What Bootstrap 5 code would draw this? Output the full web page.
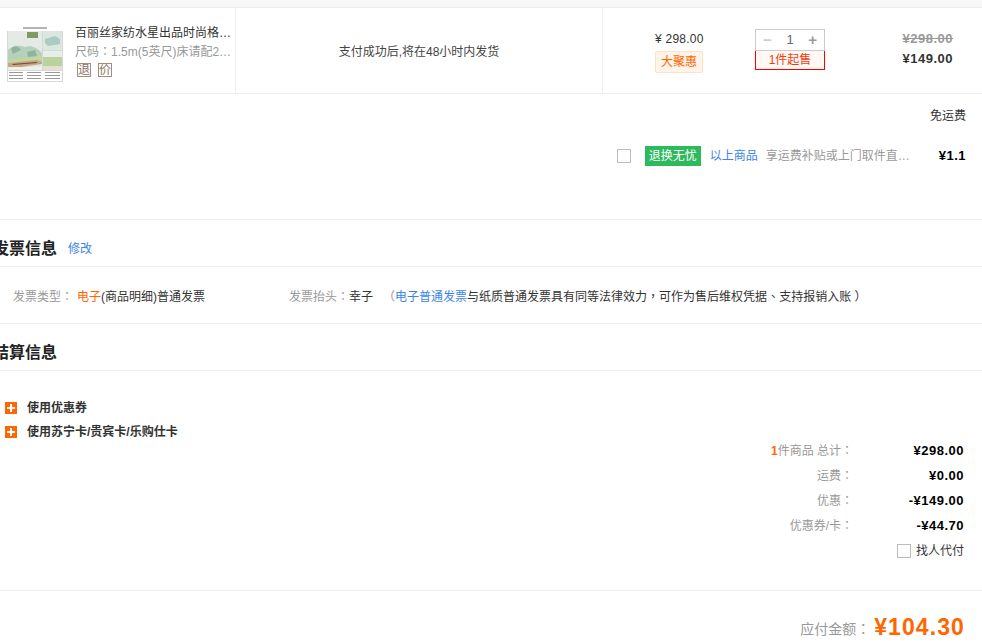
<!DOCTYPE html>
<html lang="zh-CN">
<head>
<meta charset="utf-8">
<title>结算信息</title>
<link href="https://cdn.jsdelivr.net/npm/bootstrap@5.3.0/dist/css/bootstrap.min.css" rel="stylesheet">
<style>
html,body{margin:0;height:643px;overflow:hidden;background:#fff}
body{font-family:"Liberation Sans","Noto Sans CJK SC",sans-serif;font-size:12px;line-height:18px;color:#333}
.zh-colon{font-family:"Noto Sans CJK TC",sans-serif}
.money{font-family:"Liberation Sans",sans-serif;font-weight:700;font-size:13px;letter-spacing:.5px}
.top-strip{height:8px;background:#f8f8f8;border-bottom:1px solid #eee}
.line-row{height:86px;border-bottom:1px solid #eee}
.goods-cell{width:236px;border-right:1px solid #eee;padding:0 0 0 7px}
.goods-pic{width:56px;height:56px;flex:none;margin-top:18px}
.goods-info{width:157px;margin-left:12px;padding-top:16px}
.clip-line{white-space:nowrap;overflow:hidden;text-overflow:ellipsis;height:18px}
.goods-sub{color:#999}
.tag-row{margin-top:3px;margin-left:2px;gap:7px}
.tag-box{width:14px;height:14px;border:1px solid #a98b7e;color:#8f7265;font-size:12px;line-height:12px;text-align:center;overflow:hidden}
.ship-cell{width:367px;border-right:1px solid #eee;padding-top:2px;color:#444}
.price-cell{width:152px;padding-top:22px}
.price-num{letter-spacing:.25px}
.price-tag{margin-top:3px;height:22px;width:48px;background:#fff4ea;border:1px solid #fde1c8;border-radius:2px;color:#f60;line-height:20px;text-align:center}
.price-box{width:48px;margin-left:52px}
.qty-cell{width:70px;padding-top:21px}
.qty-box{height:22px;width:70px;border:1px solid #ccc;color:#666;font-size:13px;line-height:20px}
.qty-box span{flex:1;text-align:center}
.qty-minus{color:#ccc;font-weight:700;font-size:15px}
.qty-plus{color:#999;font-weight:700;font-size:15px}
.qty-min{height:19px;border:1px solid #f00;border-top:0;background:#fff8f3;color:#f23c10;text-align:center;line-height:18px}
.sum-cell{flex:1;padding-top:21px;padding-right:29px;text-align:right;line-height:20px;color:#333}
.sum-old{color:#999;text-decoration:line-through}
.freight-row{padding:13px 16px 0 0;height:42px}
.insure-row{height:84px;border-bottom:1px solid #eee;padding:0 16px 44px 0}
.insure-check{width:14px;height:14px;border:1px solid #bbb;margin-right:14px}
.green-tag{width:56px;height:20px;background:#2dba5c;color:#fff;line-height:20px;text-align:center;margin-right:9px}
.blue-text{color:#3a85e8}
.insure-note{color:#999;width:146px;margin-left:8px;margin-right:27px}
.sec-title{height:47px;border-bottom:1px solid #eee;margin-left:-7px;padding-top:12px}
.sec-title strong{font-size:16px;color:#222;font-weight:700;line-height:22px}
.sec-title a{margin-left:11px;color:#3a85e8;text-decoration:none}
.invoice-row{height:57px;border-bottom:1px solid #eee;padding-left:13px;padding-top:2px}
.muted-label{color:#999}
.inv-kind{width:276px}
.orange-text{color:#f60}
.open-paren{margin-left:10px}
.type-label{margin-right:4px}
.coupon-area{padding:25px 0 0 5px;height:69px}
.coupon-row{height:24px;font-weight:700;color:#333}
.plus-box{width:12px;height:12px;background:#f60;position:relative;margin-right:10px;flex:none}
.plus-box::before{content:"";position:absolute;left:2px;right:2px;top:5px;height:2px;background:#fff}
.plus-box::after{content:"";position:absolute;top:2px;bottom:2px;left:5px;width:2px;background:#fff}
.total-wrap{padding-right:18px;height:152px;margin-top:-2px}
.total-row{height:25px;justify-content:flex-end}
.total-label{color:#999;text-align:right}
.total-val{width:111px;text-align:right;color:#000}
.agent-check{width:14px;height:14px;border:1px solid #bbb;margin-right:5px}
.pay-row{border-top:1px solid #eee;height:53px;padding:22px 17px 0 0;justify-content:flex-end}
.pay-label{color:#999;font-size:14px;padding-top:6px;margin-right:4px}
.pay-val{color:#f60;font-family:"Liberation Sans",sans-serif;font-size:23px;letter-spacing:1.1px;font-weight:700;line-height:28px}
</style>
</head>
<body>
<div class="top-strip"></div>
<div class="line-row d-flex">
  <div class="goods-cell d-flex">
    <svg class="goods-pic" viewBox="0 0 56 56" role="img" aria-label="商品图">
      <rect width="56" height="56" fill="#fff"/>
      <rect x="16" y="1" width="24" height="2" fill="#b5b5b5"/>
      <rect x="0" y="5" width="56" height="51" fill="#d8d8d8"/>
      <rect x="1" y="5" width="34" height="39" fill="#e4ebe6"/>
      <rect x="20" y="6" width="11" height="6" fill="#7f9c5e"/>
      <path d="M1 24C8 17 14 20 18 21C24 19 30 22 35 27V36H1Z" fill="#b5d0bb"/>
      <path d="M4 23C7 19 12 20 14 24L6 28ZM20 26L28 24L30 30L21 31Z" fill="#8fb5a0"/>
      <path d="M1 33C12 33 26 32 35 29V34C24 35 12 37 1 37Z" fill="#c3d69e"/>
      <path d="M1 37L30 34L35 36V38L8 42L1 41Z" fill="#c7a686"/>
      <path d="M5 38L30 36V37L6 39Z" fill="#6b4f3a"/>
      <rect x="1" y="41" width="34" height="3" fill="#eef0ea"/>
      <rect x="36" y="5" width="19" height="19" fill="#dce8df"/>
      <path d="M38 13l10-3 5 3v5l-12 2-3-3Z" fill="#a9cbc0"/>
      <rect x="36" y="25" width="19" height="19" fill="#b9d39f"/>
      <rect x="36" y="25" width="19" height="6" fill="#e6eee6"/>
      <rect x="36" y="40" width="19" height="4" fill="#e6dfcf"/>
      <rect x="1" y="45" width="54" height="10" fill="#fff"/>
      <g fill="#999"><rect x="2" y="46" width="14" height="1"/><rect x="20" y="46" width="14" height="1"/><rect x="38" y="46" width="15" height="1"/><rect x="2" y="49" width="14" height="1"/><rect x="20" y="49" width="14" height="1"/><rect x="38" y="49" width="15" height="1"/><rect x="2" y="52" width="14" height="1"/><rect x="20" y="52" width="14" height="1"/><rect x="38" y="52" width="15" height="1"/></g>
    </svg>
    <div class="goods-info">
      <div class="clip-line">百丽丝家纺水星出品时尚格子四件套</div>
      <div class="clip-line goods-sub">尺码<span class="zh-colon" lang="zh-TW">：</span>1.5m(5英尺)床请配2.0m被芯</div>
      <div class="d-flex tag-row"><span class="tag-box">退</span><span class="tag-box">价</span></div>
    </div>
  </div>
  <div class="ship-cell d-flex align-items-center justify-content-center">支付成功后,将在48小时内发货</div>
  <div class="price-cell">
    <div class="price-box text-nowrap"><span class="price-num">¥ 298.00</span>
      <div class="price-tag">大聚惠</div>
    </div>
  </div>
  <div class="qty-cell">
    <div class="qty-box d-flex"><span class="qty-minus">−</span><span>1</span><span class="qty-plus">+</span></div>
    <div class="qty-min">1件起售</div>
  </div>
  <div class="sum-cell money">
    <div class="sum-old">¥298.00</div>
    <div>¥149.00</div>
  </div>
</div>
<div class="freight-row text-end">免运费</div>
<div class="insure-row d-flex align-items-center justify-content-end">
  <span class="insure-check"></span>
  <span class="green-tag">退换无忧</span>
  <span class="blue-text">以上商品</span>
  <span class="insure-note clip-line">享运费补贴或上门取件直接退款</span>
  <span class="money text-black">¥1.1</span>
</div>
<div class="sec-title d-flex align-items-center"><strong>发票信息</strong><a href="#">修改</a></div>
<div class="invoice-row d-flex align-items-center">
  <div class="inv-kind"><span class="muted-label type-label">发票类型<span class="zh-colon" lang="zh-TW">：</span></span><span class="orange-text">电子</span>(商品明细)普通发票</div>
  <div><span class="muted-label">发票抬头<span class="zh-colon" lang="zh-TW">：</span></span>幸子<span class="open-paren muted-label">（</span><span class="blue-text">电子普通发票</span>与纸质普通发票具有同等法律效力<span class="zh-colon" lang="zh-TW">，</span>可作为售后维权凭据<span class="zh-colon" lang="zh-TW">、</span>支持报销入账 ）</div>
</div>
<div class="sec-title d-flex align-items-center"><strong>结算信息</strong></div>
<div class="coupon-area">
  <div class="coupon-row d-flex align-items-center"><span class="plus-box"></span>使用优惠券</div>
  <div class="coupon-row d-flex align-items-center"><span class="plus-box"></span>使用苏宁卡/贵宾卡/乐购仕卡</div>
</div>
<div class="total-wrap">
  <div class="total-row d-flex align-items-center"><span class="total-label"><span class="orange-text fw-bold">1</span>件商品 总计<span class="zh-colon" lang="zh-TW">：</span></span><span class="total-val money">¥298.00</span></div>
  <div class="total-row d-flex align-items-center"><span class="total-label">运费<span class="zh-colon" lang="zh-TW">：</span></span><span class="total-val money">¥0.00</span></div>
  <div class="total-row d-flex align-items-center"><span class="total-label">优惠<span class="zh-colon" lang="zh-TW">：</span></span><span class="total-val money">-¥149.00</span></div>
  <div class="total-row d-flex align-items-center"><span class="total-label">优惠券/卡<span class="zh-colon" lang="zh-TW">：</span></span><span class="total-val money">-¥44.70</span></div>
  <div class="total-row d-flex align-items-center"><span class="agent-check"></span><span>找人代付</span></div>
</div>
<div class="pay-row d-flex"><span class="pay-label">应付金额<span class="zh-colon" lang="zh-TW">：</span></span><span class="pay-val">¥104.30</span></div>
<script src="https://cdn.jsdelivr.net/npm/bootstrap@5.3.0/dist/js/bootstrap.bundle.min.js"></script>
</body>
</html>
